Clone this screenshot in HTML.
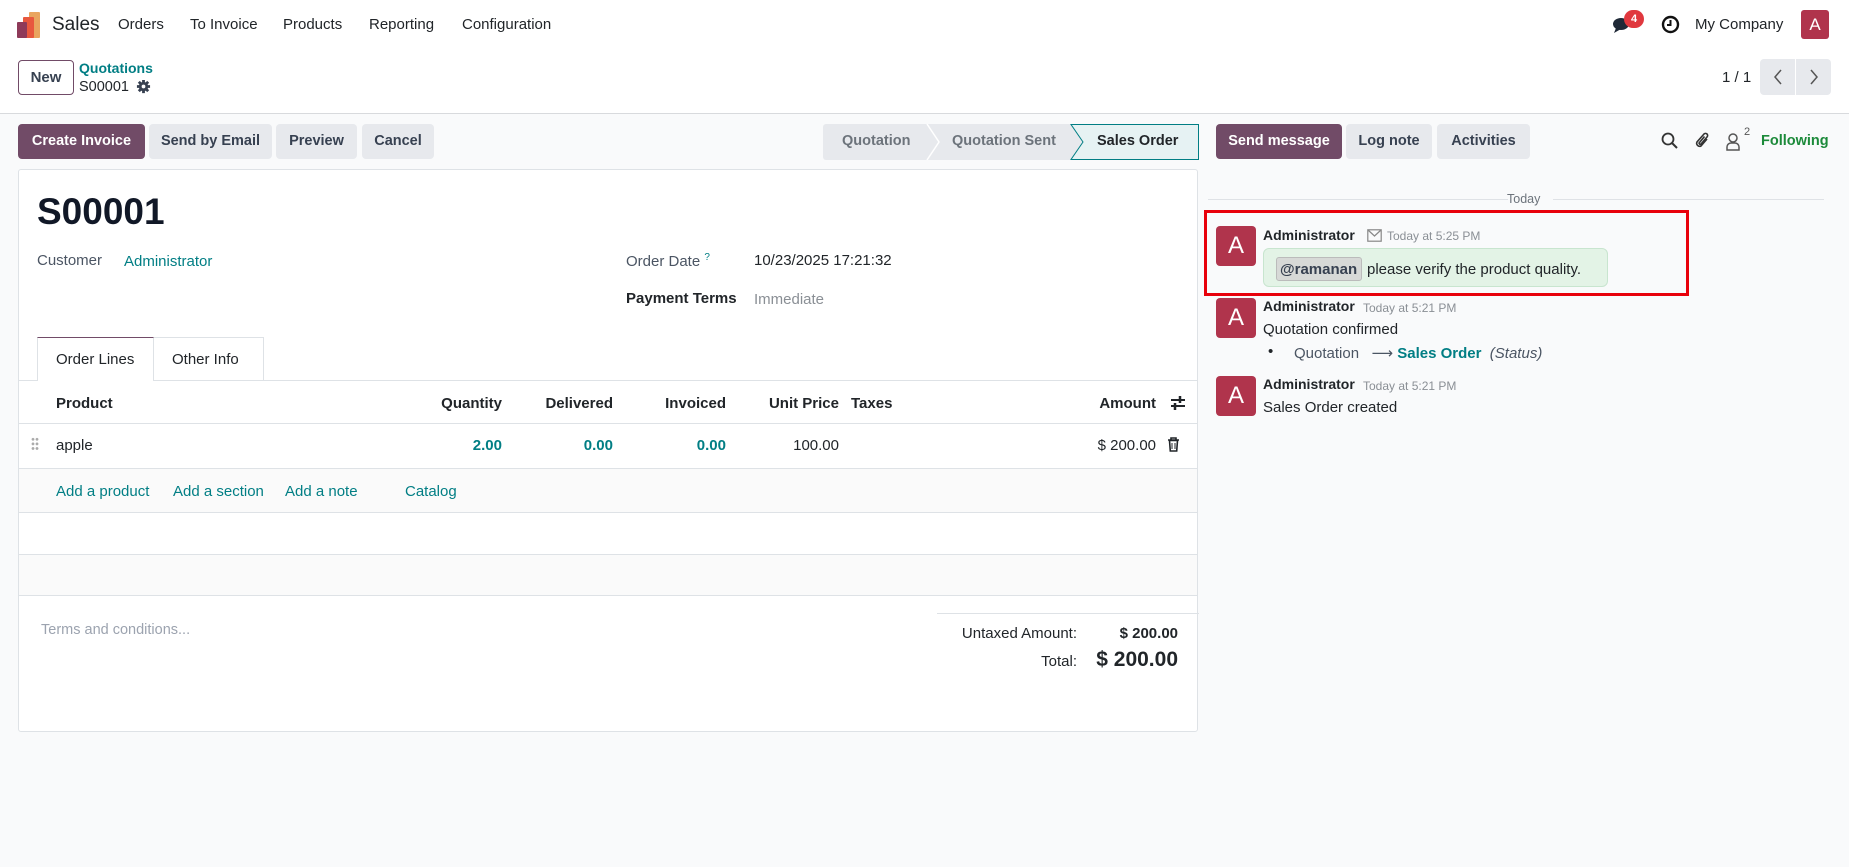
<!DOCTYPE html>
<html><head><meta charset="utf-8"><style>
*{box-sizing:border-box;margin:0;padding:0}
body{width:1849px;height:867px;position:relative;overflow:hidden;font-family:"Liberation Sans","DejaVu Sans",sans-serif;font-size:15px;color:#374151;background:#f9fafb}
.a{position:absolute;white-space:nowrap}
.top{position:absolute;left:0;top:0;width:1849px;height:114px;background:#fff;border-bottom:1px solid #d8dadd}
.btn{position:absolute;height:35px;line-height:35px;text-align:center;border-radius:4px;background:#e7e9ed;color:#374151;font-weight:bold;font-size:14.5px}
.pri{background:#714b67;color:#fff}
.teal{color:#017e84}
.sheet{position:absolute;left:18px;top:169px;width:1180px;height:563px;background:#fff;border:1px solid #dee2e6;border-radius:3px}
.hr{position:absolute;left:0;width:1178px;height:1px;background:#dee2e6}
.th{font-weight:bold;color:#212529}
.av{position:absolute;width:40px;height:40px;background:#b0344c;color:#fff;border-radius:4px;font-size:24px;text-align:center;line-height:40px}
.nm{font-weight:bold;color:#212529}
.tm{font-size:12px;color:#8a8f95}
</style></head><body>
<div class="top"></div>
<svg class="a" style="left:16px;top:12px" width="26" height="26" viewBox="0 0 26 26"><rect x="13" y="0" width="11" height="26" rx="1" fill="#e9a55f"/><rect x="7" y="5" width="11" height="21" rx="1" fill="#e8583e"/><rect x="1" y="10" width="10" height="16" rx="1" fill="#8e3a59"/></svg>
<div class="a" style="left:52px;top:14px;font-size:19px;color:#212529">Sales</div>
<div class="a" style="left:118px;top:16px;color:#212529">Orders</div>
<div class="a" style="left:190px;top:16px;color:#212529">To Invoice</div>
<div class="a" style="left:283px;top:16px;color:#212529">Products</div>
<div class="a" style="left:369px;top:16px;color:#212529">Reporting</div>
<div class="a" style="left:462px;top:16px;color:#212529">Configuration</div>
<svg class="a" style="left:1612px;top:15px" width="22" height="20" viewBox="0 0 22 20"><ellipse cx="9" cy="9" rx="8" ry="6" fill="#1f2937"/><path d="M4 13 L2 18 L9 14Z" fill="#1f2937"/></svg>
<div class="a" style="left:1624px;top:10px;width:20px;height:18px;border-radius:9px;background:#e0383e;color:#fff;font-size:11px;font-weight:bold;text-align:center;line-height:18px">4</div>
<svg class="a" style="left:1661px;top:15px" width="19" height="19" viewBox="0 0 19 19"><circle cx="9.5" cy="9.5" r="7.5" fill="none" stroke="#111" stroke-width="2.4"/><path d="M9.5 5v5H6" fill="none" stroke="#111" stroke-width="2"/></svg>
<div class="a" style="left:1695px;top:16px;color:#212529">My Company</div>
<div class="a" style="left:1801px;top:10px;width:28px;height:29px;background:#b0344c;color:#fff;border-radius:3px;text-align:center;line-height:29px;font-size:17px">A</div>
<div class="a" style="left:18px;top:60px;width:56px;height:35px;border:1px solid #714b67;border-radius:4px;text-align:center;line-height:33px;font-weight:bold;color:#374151">New</div>
<div class="a teal" style="left:79px;top:60px;font-weight:bold;font-size:14px">Quotations</div>
<div class="a" style="left:79px;top:79px;color:#212529;font-size:14.5px">S00001</div>
<svg class="a" style="left:136px;top:79px" width="15" height="15" viewBox="0 0 16 16"><circle cx="8" cy="8" r="5" fill="#374151"/><g stroke="#374151" stroke-width="3"><path d="M8 1v14M1 8h14M3 3l10 10M13 3L3 13"/></g><circle cx="8" cy="8" r="2" fill="#fff"/></svg>
<div class="a" style="left:1722px;top:69px;color:#212529">1 / 1</div>
<div class="a" style="left:1760px;top:59px;width:71px;height:36px;background:#e7e9ed;border-radius:4px"></div>
<div class="a" style="left:1795px;top:59px;width:1px;height:36px;background:#fff"></div>
<svg class="a" style="left:1771px;top:68px" width="14" height="18"><path d="M10 2L4 9l6 7" fill="none" stroke="#555" stroke-width="1.5"/></svg>
<svg class="a" style="left:1807px;top:68px" width="14" height="18"><path d="M4 2l6 7-6 7" fill="none" stroke="#555" stroke-width="1.5"/></svg>
<div class="btn pri" style="left:18px;top:124px;width:127px">Create Invoice</div>
<div class="btn" style="left:149px;top:124px;width:123px">Send by Email</div>
<div class="btn" style="left:276px;top:124px;width:81px">Preview</div>
<div class="btn" style="left:362px;top:124px;width:72px">Cancel</div>
<svg class="a" style="left:823px;top:124px" width="376" height="36" viewBox="0 0 376 36"><rect x="0" y="0" width="376" height="36" rx="3" fill="#e7e9ed"/><path d="M248 0.5H375.5V35.5H248L260 18Z" fill="#e6f2f3" stroke="#017e84"/><path d="M104 0l12 18-12 18" fill="none" stroke="#fff" stroke-width="1.5"/></svg>
<div class="a" style="left:842px;top:133px;font-weight:bold;font-size:14.5px;color:#6c737b">Quotation</div>
<div class="a" style="left:952px;top:133px;font-weight:bold;font-size:14.5px;color:#6c737b">Quotation Sent</div>
<div class="a" style="left:1097px;top:133px;font-weight:bold;font-size:14.5px;color:#212529">Sales Order</div>
<div class="sheet">
 <div class="a" style="left:18px;top:21px;font-size:37px;font-weight:bold;color:#111827">S00001</div>
 <div class="a" style="left:18px;top:82px;color:#4b5563">Customer</div>
 <div class="a teal" style="left:105px;top:83px">Administrator</div>
 <div class="a" style="left:607px;top:82px;color:#4b5563">Order Date <sup class="teal" style="font-size:10px">?</sup></div>
 <div class="a" style="left:735px;top:82px;color:#212529">10/23/2025 17:21:32</div>
 <div class="a" style="left:607px;top:120px;font-weight:bold;color:#212529">Payment Terms</div>
 <div class="a" style="left:735px;top:121px;color:#8a8f95">Immediate</div>
 <div class="a" style="left:18px;top:167px;width:117px;height:44px;background:#fff;border:1px solid #dee2e6;border-top:1px solid #714b67;border-bottom:none;z-index:2"></div>
 <div class="a" style="left:135px;top:167px;width:110px;height:43px;border:1px solid #dee2e6;border-left:none;border-bottom:none"></div>
 <div class="a" style="left:37px;top:181px;color:#212529;z-index:3">Order Lines</div>
 <div class="a" style="left:153px;top:181px;color:#212529">Other Info</div>
 <div class="hr" style="top:210px"></div>
 <div class="th a" style="left:37px;top:225px">Product</div>
 <div class="th a" style="right:695px;top:225px">Quantity</div>
 <div class="th a" style="right:584px;top:225px">Delivered</div>
 <div class="th a" style="right:471px;top:225px">Invoiced</div>
 <div class="th a" style="right:358px;top:225px">Unit Price</div>
 <div class="th a" style="left:832px;top:225px">Taxes</div>
 <div class="th a" style="right:41px;top:225px">Amount</div>
 <svg class="a" style="left:1150px;top:224px" width="18" height="18" viewBox="0 0 18 18"><path d="M2 6h14M2 12h14" stroke="#212529" stroke-width="2"/><path d="M11 2v7M6 9v7" stroke="#212529" stroke-width="2.5"/></svg>
 <div class="hr" style="top:253px"></div>
 <div class="a" style="left:12px;top:267px;width:8px;height:14px;background:radial-gradient(circle,#aaa 1.2px,transparent 1.6px) 0 0/4px 4.6px"></div>
 <div class="a" style="left:37px;top:267px;color:#212529">apple</div>
 <div class="a teal" style="right:695px;top:267px;font-weight:bold">2.00</div>
 <div class="a teal" style="right:584px;top:267px;font-weight:bold">0.00</div>
 <div class="a teal" style="right:471px;top:267px;font-weight:bold">0.00</div>
 <div class="a" style="right:358px;top:267px;color:#212529">100.00</div>
 <div class="a" style="right:41px;top:267px;color:#212529">$ 200.00</div>
 <svg class="a" style="left:1148px;top:267px" width="13" height="15" viewBox="0 0 13 15"><path d="M1 3h11M4 3V1h5v2M2.5 3.5l.8 10.5h6.4l.8-10.5Z" fill="none" stroke="#212529" stroke-width="1.6"/><path d="M5 6v6M8 6v6" stroke="#212529"/></svg>
 <div class="hr" style="top:298px"></div>
 <div class="a" style="left:0;top:299px;width:1178px;height:44px;background:#fafafa"></div>
 <div class="a teal" style="left:37px;top:313px">Add a product</div>
 <div class="a teal" style="left:154px;top:313px">Add a section</div>
 <div class="a teal" style="left:266px;top:313px">Add a note</div>
 <div class="a teal" style="left:386px;top:313px">Catalog</div>
 <div class="hr" style="top:342px"></div>
 <div class="hr" style="top:384px"></div>
 <div class="a" style="left:0;top:385px;width:1178px;height:40px;background:#fafafa"></div>
 <div class="hr" style="top:425px"></div>
 <div class="a" style="left:22px;top:452px;color:#9ca3af;font-size:14.5px">Terms and conditions...</div>
 <div class="a" style="left:918px;top:443px;width:262px;height:1px;background:#dee2e6"></div>
 <div class="a" style="right:120px;top:455px;color:#212529">Untaxed Amount:</div>
 <div class="a" style="right:19px;top:455px;font-weight:bold;color:#212529">$ 200.00</div>
 <div class="a" style="right:120px;top:483px;color:#212529">Total:</div>
 <div class="a" style="right:19px;top:478px;font-weight:bold;font-size:21px;color:#212529">$ 200.00</div>
</div>
<div class="btn pri" style="left:1216px;top:124px;width:126px">Send message</div>
<div class="btn" style="left:1346px;top:124px;width:86px">Log note</div>
<div class="btn" style="left:1437px;top:124px;width:93px">Activities</div>
<svg class="a" style="left:1661px;top:132px" width="18" height="18" viewBox="0 0 18 18"><circle cx="7" cy="7" r="5.5" fill="none" stroke="#333" stroke-width="1.8"/><path d="M11 11l5 5" stroke="#333" stroke-width="2"/></svg>
<svg class="a" style="left:1694px;top:131px" width="18" height="20" viewBox="0 0 18 20"><path d="M13 8l-6 7a3 3 0 0 1-4-4l7-8a2 2 0 0 1 3 3l-6 7a1 1 0 0 1-1.5-1.5l5-6" fill="none" stroke="#333" stroke-width="1.6"/></svg>
<svg class="a" style="left:1725px;top:132px" width="16" height="20" viewBox="0 0 16 20"><circle cx="8" cy="6" r="4" fill="none" stroke="#555" stroke-width="1.5"/><path d="M2 18v-3a4 4 0 0 1 4-4h4a4 4 0 0 1 4 4v3Z" fill="none" stroke="#555" stroke-width="1.5"/></svg>
<div class="a" style="left:1744px;top:126px;font-size:11px;color:#555">2</div>
<div class="a" style="left:1761px;top:133px;font-weight:bold;font-size:14.5px;color:#1c8a3a">Following</div>
<div class="a" style="left:1208px;top:199px;width:300px;height:1px;background:#dfe2e6"></div>
<div class="a" style="left:1553px;top:199px;width:271px;height:1px;background:#dfe2e6"></div>
<div class="a" style="left:1507px;top:192px;font-size:12.5px;color:#6c737b">Today</div>
<div class="a" style="left:1204px;top:210px;width:485px;height:86px;border:3px solid #e8000b"></div>
<div class="av" style="left:1216px;top:226px">A</div>
<div class="a nm" style="left:1263px;top:227px;font-size:14px">Administrator</div>
<svg class="a" style="left:1367px;top:229px" width="15" height="13" viewBox="0 0 15 13"><rect x="0.8" y="0.8" width="13.4" height="11.4" fill="none" stroke="#888" stroke-width="1.2"/><path d="M1 1l6.5 6 6.5-6" fill="none" stroke="#888" stroke-width="1.2"/></svg>
<div class="a tm" style="left:1387px;top:229px">Today at 5:25 PM</div>
<div class="a" style="left:1263px;top:248px;width:345px;height:39px;background:#e3f3e6;border:1px solid #c8e5cf;border-radius:6px"></div>
<div class="a" style="left:1276px;top:257px;width:86px;height:24px;background:#d7d9d7;border:1px solid #bbb;border-radius:3px"></div>
<div class="a" style="left:1280px;top:261px;font-weight:bold;color:#374151">@ramanan</div>
<div class="a" style="left:1367px;top:261px;color:#212529">please verify the product quality.</div>
<div class="av" style="left:1216px;top:298px">A</div>
<div class="a nm" style="left:1263px;top:298px;font-size:14px">Administrator</div>
<div class="a tm" style="left:1363px;top:301px">Today at 5:21 PM</div>
<div class="a" style="left:1263px;top:321px;color:#212529">Quotation confirmed</div>
<div class="a" style="left:1268px;top:343px;color:#212529">•</div>
<div class="a" style="left:1294px;top:344px;color:#4b5563">Quotation &nbsp;&nbsp;⟶ <span class="teal" style="font-weight:bold">Sales Order</span> &nbsp;<i style="color:#4b5563">(Status)</i></div>
<div class="av" style="left:1216px;top:376px">A</div>
<div class="a nm" style="left:1263px;top:376px;font-size:14px">Administrator</div>
<div class="a tm" style="left:1363px;top:379px">Today at 5:21 PM</div>
<div class="a" style="left:1263px;top:399px;color:#212529">Sales Order created</div>
</body></html>
